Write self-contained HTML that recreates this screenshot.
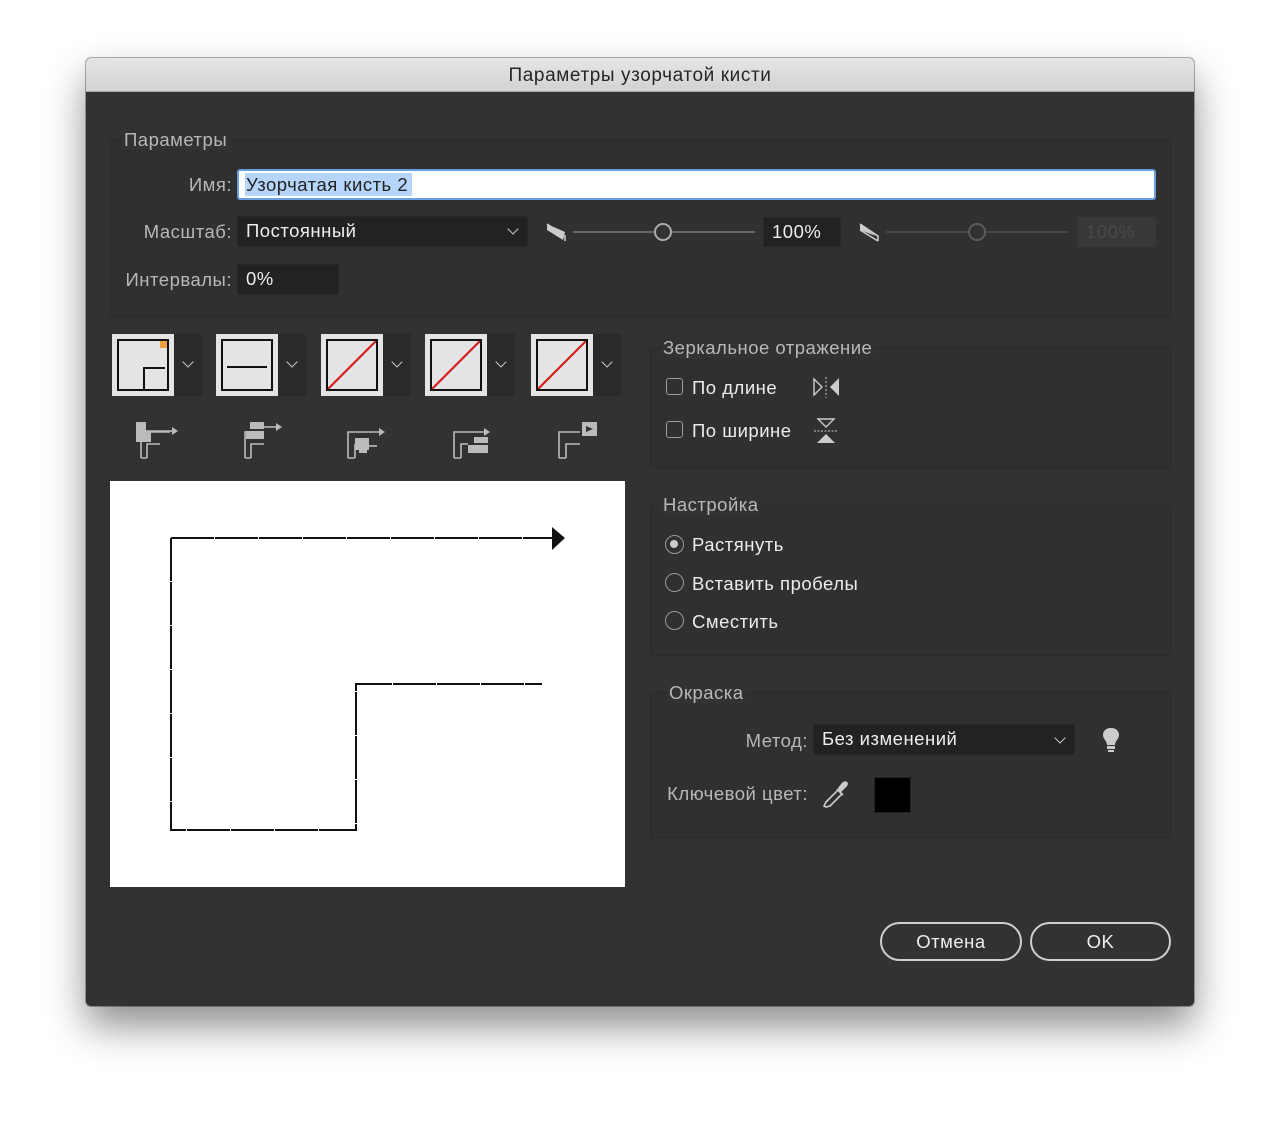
<!DOCTYPE html>
<html><head><meta charset="utf-8"><style>
*{box-sizing:border-box;margin:0;padding:0}
body{width:1280px;height:1121px;background:#fff;position:relative;font-family:"Liberation Sans","DejaVu Sans",sans-serif;overflow:hidden}
.dlg{position:absolute;left:86px;top:58px;width:1108px;height:948px;background:#323232;border-radius:5px;box-shadow:0 20px 40px rgba(0,0,0,.45),0 0 0 1px rgba(0,0,0,.3);overflow:hidden}
.title{position:absolute;left:0;top:0;width:100%;height:34px;background:linear-gradient(#e6e6e6,#d2d2d2);border-bottom:1px solid #a8a8a8;text-align:center;font-size:19px;letter-spacing:.6px;line-height:36px;color:#262626}
.a{position:absolute}
.box{position:absolute;border:1px solid #2a2a2a;border-radius:3px;background:#303030}
.lg,.lbl,.t,.fld,.btn{letter-spacing:.5px}
.lg{position:absolute;color:#b8b8b8;font-size:18.5px;background:#323232;padding:0 2px;line-height:20px}
.lbl{position:absolute;color:#b8b8b8;font-size:18.5px;text-align:right;line-height:20px}
.t{position:absolute;color:#ececec;font-size:18.5px;line-height:20px}
.fld{position:absolute;background:#222;border:1px solid #282828;border-radius:2px;color:#eee;font-size:18.5px;line-height:28px;padding-left:8px}
.chev{position:absolute;width:8px;height:8px;border-right:1.6px solid #ccc;border-bottom:1.6px solid #ccc;transform:rotate(45deg)}
.tile{position:absolute;top:334px;width:90px;height:62px;background:#2a2a2a;border-radius:2px}
.tile .sq{position:absolute;left:0;top:0;width:62px;height:62px;background:#e4e4e4}
.tile .in{position:absolute;left:5px;top:5px;width:52px;height:52px;border:2px solid #111;overflow:hidden}
.cb{position:absolute;width:17px;height:17px;border:1.5px solid #9a9a9a;border-radius:3px}
.rb{position:absolute;width:19px;height:19px;border:1.5px solid #9a9a9a;border-radius:50%}
.btn{position:absolute;height:39px;border:2px solid #cfcfcf;border-radius:20px;color:#eee;font-size:18.5px;text-align:center;line-height:35px}
</style></head><body>
<div class="dlg">
<div class="title">Параметры узорчатой кисти</div>
</div>
<div class="box" style="left:110px;top:140px;width:1061px;height:177px"></div>
<div class="lg" style="left:122px;top:130px">Параметры</div>
<div class="lbl" style="left:140px;top:175px;width:92px">Имя:</div>
<div class="a" style="left:237px;top:169px;width:919px;height:31px;background:#fff;border:2px solid #6aa0e0;border-radius:3px"></div>
<div class="a" style="left:245px;top:173px;width:167px;height:23px;background:#b5d5fb"></div>
<div class="t" style="left:246px;top:175px;color:#222">Узорчатая кисть 2</div>
<div class="lbl" style="left:110px;top:222px;width:122px">Масштаб:</div>
<div class="fld" style="left:237px;top:216px;width:291px;height:31px">Постоянный</div>
<div class="chev" style="left:509px;top:225px"></div>
<svg class="a" style="left:545px;top:222px" width="24" height="22"><path d="M2 2 L2 8 L18 18 L20 10 Z" fill="#ccc"/><path d="M2 2 L20 14 L20 19" stroke="#ccc" stroke-width="1.6" fill="none"/></svg>
<div class="a" style="left:573px;top:231px;width:182px;height:2px;background:#666"></div>
<div class="a" style="left:654px;top:223px;width:18px;height:18px;border:2.5px solid #aaa;border-radius:50%;background:#323232"></div>
<div class="fld" style="left:763px;top:217px;width:78px;height:30px">100%</div>
<svg class="a" style="left:858px;top:222px" width="24" height="22"><path d="M2 2 L2 8 L18 14 Z" fill="#ccc"/><path d="M2 2 L20 14 L20 19 M2 8 L20 19" stroke="#ccc" stroke-width="1.6" fill="none"/></svg>
<div class="a" style="left:886px;top:231px;width:182px;height:2px;background:#474747"></div>
<div class="a" style="left:968px;top:223px;width:18px;height:18px;border:2.5px solid #5a5a5a;border-radius:50%;background:#323232"></div>
<div class="fld" style="left:1077px;top:217px;width:79px;height:30px;background:#383838;border-color:#383838;color:#4a4a4a">100%</div>
<div class="lbl" style="left:110px;top:270px;width:122px">Интервалы:</div>
<div class="fld" style="left:237px;top:264px;width:102px;height:31px">0%</div>

<div class="tile" style="left:112px"><div class="sq"><div class="in"><div class="a" style="right:0;top:0;width:7px;height:7px;background:#f0a040"></div><div class="a" style="left:24px;top:26px;width:22px;height:2px;background:#111"></div><div class="a" style="left:24px;top:26px;width:2px;height:24px;background:#111"></div></div></div><div class="chev" style="left:72px;top:24px"></div></div>
<div class="tile" style="left:216px"><div class="sq"><div class="in"><div class="a" style="left:4px;top:25px;width:40px;height:2px;background:#111"></div></div></div><div class="chev" style="left:72px;top:24px"></div></div>
<div class="tile" style="left:321px"><div class="sq"><div class="in"><svg width="52" height="52" style="position:absolute;left:-2px;top:-2px"><line x1="2" y1="50" x2="50" y2="2" stroke="#d02020" stroke-width="2.2"/></svg></div></div><div class="chev" style="left:72px;top:24px"></div></div>
<div class="tile" style="left:425px"><div class="sq"><div class="in"><svg width="52" height="52" style="position:absolute;left:-2px;top:-2px"><line x1="2" y1="50" x2="50" y2="2" stroke="#d02020" stroke-width="2.2"/></svg></div></div><div class="chev" style="left:72px;top:24px"></div></div>
<div class="tile" style="left:531px"><div class="sq"><div class="in"><svg width="52" height="52" style="position:absolute;left:-2px;top:-2px"><line x1="2" y1="50" x2="50" y2="2" stroke="#d02020" stroke-width="2.2"/></svg></div></div><div class="chev" style="left:72px;top:24px"></div></div>

<svg class="a" style="left:132px;top:418px" width="50" height="46"><path d="M9 40 V14 H38 M15 40 V26 H28 M9 40 H15" stroke="#bbb" stroke-width="1.6" fill="none"/><rect x="4" y="4" width="10" height="10" fill="#bbb"/><rect x="4" y="14" width="15" height="10" fill="#bbb"/><path d="M14 13 H40" stroke="#bbb" stroke-width="1.6"/><path d="M40 9 L46 13 L40 17 Z" fill="#bbb"/></svg>
<svg class="a" style="left:236px;top:418px" width="50" height="46"><path d="M9 40 V14 H14 M15 40 V26 H28 M9 40 H15" stroke="#bbb" stroke-width="1.6" fill="none"/><rect x="14" y="4" width="14" height="7" fill="#bbb"/><rect x="10" y="13" width="18" height="8" fill="#bbb"/><path d="M28 9 H40" stroke="#bbb" stroke-width="1.6"/><path d="M40 5 L46 9 L40 13 Z" fill="#bbb"/></svg>
<svg class="a" style="left:341px;top:418px" width="50" height="46"><path d="M7 40 V14 H38 M14 40 V26 M7 40 H14" stroke="#bbb" stroke-width="1.6" fill="none"/><path d="M38 10 L44 14 L38 18 Z" fill="#bbb"/><rect x="14" y="20" width="14" height="12" fill="#bbb"/><rect x="18" y="29" width="8" height="6" fill="#bbb"/><path d="M26 28 H36" stroke="#bbb" stroke-width="1.6"/></svg>
<svg class="a" style="left:446px;top:418px" width="50" height="46"><path d="M8 40 V14 H38 M15 40 V26 H22 M8 40 H15" stroke="#bbb" stroke-width="1.6" fill="none"/><path d="M38 10 L44 14 L38 18 Z" fill="#bbb"/><rect x="28" y="19" width="14" height="6" fill="#bbb"/><rect x="22" y="27" width="20" height="8" fill="#bbb"/></svg>
<svg class="a" style="left:552px;top:418px" width="50" height="46"><path d="M7 40 V14 H28 M14 40 V26 H28 M7 40 H14" stroke="#bbb" stroke-width="1.6" fill="none"/><rect x="30" y="4" width="15" height="14" fill="#bbb"/><path d="M34 8 L41 11 L34 14 Z" fill="#323232"/></svg>

<div class="a" style="left:110px;top:481px;width:515px;height:406px;background:#fff"></div>
<svg class="a" style="left:110px;top:481px" width="515" height="406"><path d="M61 57 H445 M61 57 V349 H246 V203 H432" stroke="#111" stroke-width="2" fill="none" stroke-dasharray="43 1"/><path d="M442 46 L455 57 L442 69 Z" fill="#111"/></svg>

<div class="box" style="left:650px;top:347px;width:521px;height:121px"></div>
<div class="lg" style="left:661px;top:338px">Зеркальное отражение</div>
<div class="cb" style="left:666px;top:378px"></div><div class="t" style="left:692px;top:378px">По длине</div>
<svg class="a" style="left:810px;top:374px" width="32" height="26"><path d="M4 5 L12 13 L4 21 Z" stroke="#ccc" stroke-width="1.4" fill="none"/><path d="M16 3 V24" stroke="#ccc" stroke-width="1" stroke-dasharray="2 2"/><path d="M29 4 L20 13 L29 22 Z" fill="#ccc"/></svg>
<div class="cb" style="left:666px;top:421px"></div><div class="t" style="left:692px;top:421px">По ширине</div>
<svg class="a" style="left:812px;top:416px" width="28" height="30"><path d="M6 3 H22 L14 11 Z" stroke="#ccc" stroke-width="1.4" fill="none"/><path d="M2 15 H26" stroke="#ccc" stroke-width="1" stroke-dasharray="2 1.5"/><path d="M5 27 L14 18 L23 27 Z" fill="#ccc"/></svg>

<div class="box" style="left:650px;top:505px;width:521px;height:151px"></div>
<div class="lg" style="left:661px;top:495px">Настройка</div>
<div class="rb" style="left:665px;top:535px"><div class="a" style="left:4px;top:4px;width:8px;height:8px;border-radius:50%;background:#ccc"></div></div><div class="t" style="left:692px;top:535px">Растянуть</div>
<div class="rb" style="left:665px;top:573px"></div><div class="t" style="left:692px;top:574px">Вставить пробелы</div>
<div class="rb" style="left:665px;top:611px"></div><div class="t" style="left:692px;top:612px">Сместить</div>

<div class="box" style="left:650px;top:692px;width:521px;height:146px"></div>
<div class="lg" style="left:667px;top:683px">Окраска</div>
<div class="lbl" style="left:700px;top:731px;width:108px">Метод:</div>
<div class="fld" style="left:813px;top:724px;width:262px;height:31px">Без изменений</div>
<div class="chev" style="left:1056px;top:734px"></div>
<svg class="a" style="left:1100px;top:726px" width="22" height="28"><path d="M11 2 C5 2 3 6 3 9 C3 13 7 15 7 19 H15 C15 15 19 13 19 9 C19 6 17 2 11 2 Z" fill="#ccc"/><rect x="7" y="20" width="8" height="3" fill="#ccc"/><rect x="8" y="24" width="6" height="2" fill="#ccc"/></svg>
<div class="lbl" style="left:640px;top:784px;width:168px">Ключевой цвет:</div>
<svg class="a" style="left:820px;top:780px" width="32" height="30"><path d="M4 26 L6 22 L18 10 L22 14 L10 26 L6 27 Z" stroke="#ccc" stroke-width="1.6" fill="none"/><path d="M17 9 L23 15 M20 12 L26 6 C28 4 27 2 25 2 L23 3 L19 8 Z" stroke="#ccc" stroke-width="1.6" fill="#ccc"/></svg>
<div class="a" style="left:874px;top:777px;width:37px;height:36px;background:#000;border:1px solid #222"></div>

<div class="btn" style="left:880px;top:922px;width:142px">Отмена</div>
<div class="btn" style="left:1030px;top:922px;width:141px;border-width:2.5px">OK</div>
</body></html>
